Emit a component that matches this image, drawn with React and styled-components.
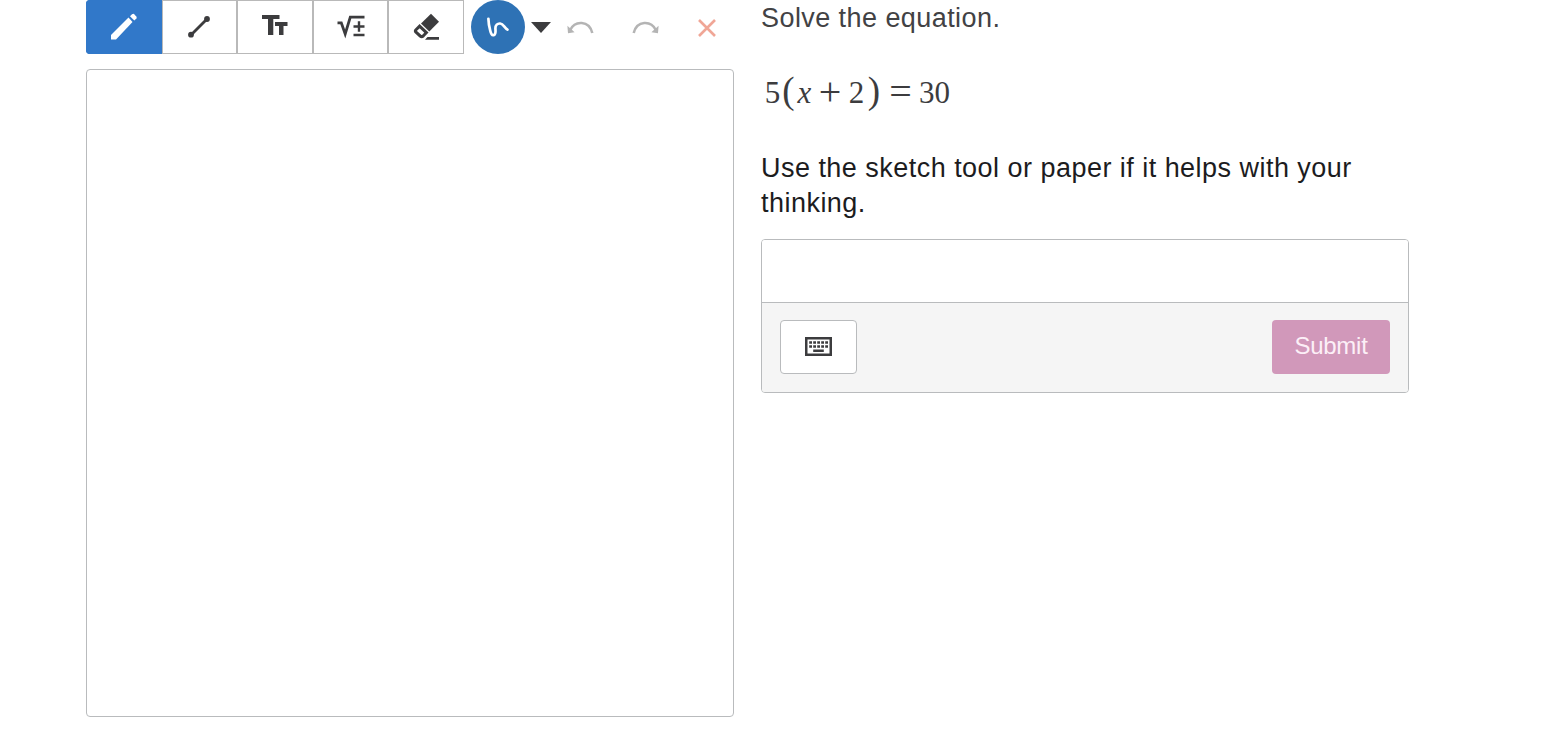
import React, { useState } from 'react';
import styled, { createGlobalStyle } from 'styled-components';

const GlobalStyle = createGlobalStyle`
  * {
    box-sizing: border-box;
  }

  body {
    margin: 0;
    background: #fff;
    color: #3c3c3e;
    font-family: "Liberation Sans", Arial, sans-serif;
    overflow: hidden;
  }
`;

// Two equal columns: sketch on the left, question on the right
const Page = styled.main`
  display: grid;
  grid-template-columns: 648px 648px;
  column-gap: 27px;
  padding-left: 86px;
  height: 744px;
`;

const SketchColumn = styled.section`
  display: flex;
  flex-direction: column;
  gap: 15px;
`;

const Toolbar = styled.div`
  display: flex;
  align-items: center;
  height: 54px;
`;

const ToolGroup = styled.div`
  display: flex;
  width: 378px;
  height: 54px;
  border-radius: 4px 0 0 4px;
  overflow: hidden;
`;

const ToolButton = styled.button`
  flex: 1;
  display: flex;
  align-items: center;
  justify-content: center;
  padding: 0;
  color: ${(props) => (props.$active ? '#fff' : '#3c3c3e')};
  background: ${(props) => (props.$active ? '#3178c9' : '#fff')};
  border: 1px solid ${(props) => (props.$active ? '#3178c9' : '#b9b9b9')};
`;

const StrokePicker = styled.button`
  display: flex;
  align-items: center;
  gap: 6px;
  margin-left: 7px;
  padding: 0;
  border: 0;
  background: none;
`;

const StrokeCircle = styled.span`
  display: flex;
  align-items: center;
  justify-content: center;
  width: 54px;
  height: 54px;
  border-radius: 50%;
  background: #2e72b5;
`;

const Caret = styled.span`
  border-left: 10px solid transparent;
  border-right: 10px solid transparent;
  border-top: 11px solid #3c3c3e;
  margin-top: 1px;
`;

const Actions = styled.div`
  display: flex;
  flex: 1;
  align-items: center;
  justify-content: space-between;
  padding: 2px 17px 0 16px;
`;

const ActionButton = styled.button`
  display: flex;
  padding: 0;
  border: 0;
  background: none;
  color: ${(props) => props.$color || '#b4b4b4'};
`;

const Canvas = styled.div`
  height: 648px;
  border: 1px solid #b9bbbd;
  border-radius: 4px;
`;

const Question = styled.section`
  display: flex;
  flex-direction: column;
  padding-top: 1px;
`;

const Prompt = styled.p`
  margin: 0;
  font-size: 27px;
  line-height: 35px;
  letter-spacing: ${(props) => props.$spacing};
  color: ${(props) => props.$color};
  white-space: pre-line;
`;

const Equation = styled.div`
  display: flex;
  align-items: center;
  height: 40px;
  margin: 37px 0 38px 3px;
  font-family: "Liberation Serif", "Times New Roman", serif;
  font-size: 31px;
  line-height: 40px;
`;

const Term = styled.span`
  width: ${(props) => props.$width}px;
  text-align: center;
  font-style: ${(props) => (props.$italic ? 'italic' : 'normal')};
`;

const Paren = styled(Term)`
  font-size: 37px;
  line-height: 36px;
  height: 40px;
`;

// Operators are drawn wider than the digits
const Operator = styled(Term)`
  height: 40px;
  font-size: 40px;
  line-height: 37px;
`;

const AnswerBox = styled.div`
  height: 154px;
  margin-top: 18px;
  border: 1px solid #b9bbbd;
  border-radius: 4px;
  overflow: hidden;
`;

const AnswerInput = styled.input`
  display: block;
  width: 100%;
  height: 63px;
  padding: 0 18px;
  border: 0;
  border-bottom: 1px solid #b9bbbd;
  outline: none;
  font-size: 27px;
`;

const AnswerFooter = styled.div`
  display: flex;
  align-items: flex-start;
  justify-content: space-between;
  height: 89px;
  padding: 17px 18px 0;
  background: #f5f5f5;
`;

const KeyboardButton = styled.button`
  display: flex;
  align-items: center;
  justify-content: center;
  width: 77px;
  height: 54px;
  padding: 0 0 1px;
  color: #3c3c3e;
  background: #fff;
  border: 1px solid #b9bbbd;
  border-radius: 4px;
`;

const SubmitButton = styled.button`
  width: 118px;
  height: 54px;
  padding: 0 0 2px;
  border: 0;
  border-radius: 4px;
  background: #d198ba;
  color: #fceff7;
  font-family: inherit;
  font-size: 24px;
  letter-spacing: -0.25px;
`;

const PencilIcon = () => (
  <svg width="28" height="28" viewBox="0 0 28 28" fill="currentColor">
    <path d="M1 26.5V22L18.5 4.5L22.5 9L6 26.5Z" />
    <path d="M20 3.2L22 1.3Q23 .5 24 1L26.3 3.4Q27 4.4 26.4 5.4L24.3 7.6Z" />
  </svg>
);

const LineIcon = () => (
  <svg width="24" height="24" viewBox="0 0 24 24">
    <path d="M4 20L20 4" stroke="currentColor" strokeWidth="2.8" />
    <circle cx="4" cy="19.7" r="2.9" fill="currentColor" />
    <circle cx="20" cy="4" r="2.9" fill="currentColor" />
  </svg>
);

const TextIcon = () => (
  <svg width="26" height="24" viewBox="0 0 26 24" fill="currentColor">
    <path d="M0 0H17.5V4H11.3V20H6V4H0Z" />
    <path d="M13 7H25.5V11H21.5V20H17V11H13Z" />
  </svg>
);

const MathIcon = () => (
  <svg width="28" height="24" viewBox="0 0 28 24" fill="none" stroke="currentColor">
    <path d="M.5 7.8H4.3L8.2 19L13.3 2.2H27.5" strokeWidth="2.8" />
    <path d="M16.5 11.5H27.5M22 6.3V16.8M16.5 20H27.5" strokeWidth="2.4" />
  </svg>
);

const EraserIcon = () => (
  <svg width="28" height="28" viewBox="-1 0 28 28">
    <path d="M18 .8L26 8.7L16.3 18.5L8 10.5Z" fill="currentColor" />
    <path
      d="M6.6 13.2L13.4 19.6L10.2 23Q8.7 24.3 7.2 23L3 19.2Q1.8 17.9 3 16.7Z"
      fill="none"
      stroke="currentColor"
      strokeWidth="3"
    />
    <path d="M14.5 24L12 26.8H26V24Z" fill="currentColor" />
  </svg>
);

const SquiggleIcon = () => (
  <svg width="24" height="22" viewBox="0 0 24 22">
    <path
      d="M2.4 2.8C2.5 7 3.2 11 4.2 14.5C5 18 6 19.6 7.6 19.2C10.2 18.3 9.6 15.5 9.4 12.5C9.2 9 11.5 7.3 14.2 7.5C17.5 7.8 18.5 12 21.5 13.6"
      fill="none"
      stroke="#fff"
      strokeWidth="2.7"
      strokeLinecap="round"
    />
  </svg>
);

const UndoIcon = ({ flip }) => (
  <svg width="27" height="14" viewBox="0 0 27 14">
    <g transform={flip ? 'translate(27 0) scale(-1 1)' : undefined}>
      <path d="M3.2 9C8-.7 22-.8 25.3 12" fill="none" stroke="currentColor" strokeWidth="2.6" />
      <path d="M.4 4.7L1 12.2L7.6 11.3Z" fill="currentColor" />
    </g>
  </svg>
);

const ClearIcon = () => (
  <svg width="20" height="20" viewBox="0 0 20 20">
    <path d="M2 2L18 18M18 2L2 18" stroke="currentColor" strokeWidth="2.6" />
  </svg>
);

const KeyboardIcon = () => (
  <svg width="27" height="19" viewBox="0 0 27 19">
    <rect x="1.25" y="1.25" width="24.5" height="16.5" fill="none" stroke="currentColor" strokeWidth="2.5" />
    <path d="M4.2 5.5H23M4.2 9.5H23" stroke="currentColor" strokeWidth="2.7" strokeDasharray="2.8 1.2" />
    <path d="M8.2 13.8H18.8" stroke="currentColor" strokeWidth="2.5" />
  </svg>
);

const tools = [
  { name: 'Pencil', Icon: PencilIcon },
  { name: 'Line', Icon: LineIcon },
  { name: 'Text', Icon: TextIcon },
  { name: 'Math', Icon: MathIcon },
  { name: 'Eraser', Icon: EraserIcon },
];

const App = () => {
  const [tool, setTool] = useState('Pencil');
  const [answer, setAnswer] = useState('');

  return (
    <Page>
      <GlobalStyle />
      <SketchColumn>
        <Toolbar>
          <ToolGroup>
            {tools.map(({ name, Icon }) => (
              <ToolButton
                key={name}
                aria-label={name}
                $active={tool === name}
                onClick={() => setTool(name)}
              >
                <Icon />
              </ToolButton>
            ))}
          </ToolGroup>
          <StrokePicker aria-label="Stroke">
            <StrokeCircle>
              <SquiggleIcon />
            </StrokeCircle>
            <Caret />
          </StrokePicker>
          <Actions>
            <ActionButton aria-label="Undo"><UndoIcon /></ActionButton>
            <ActionButton aria-label="Redo"><UndoIcon flip /></ActionButton>
            <ActionButton aria-label="Clear" $color="#f0a696"><ClearIcon /></ActionButton>
          </Actions>
        </Toolbar>
        <Canvas />
      </SketchColumn>

      <Question>
        <Prompt $color="#424244" $spacing="0.43px">Solve the equation.</Prompt>
        <Equation>
          <Term $width={17}>5</Term>
          <Paren $width={15}>(</Paren>
          <Term $width={17} $italic>x</Term>
          <Operator $width={34}>+</Operator>
          <Term $width={19}>2</Term>
          <Paren $width={16}>)</Paren>
          <Operator $width={37}>=</Operator>
          <Term $width={31}>30</Term>
        </Equation>
        <Prompt $color="#1c1c1e" $spacing="0.47px">
          {'Use the sketch tool or paper if it helps with your\nthinking.'}
        </Prompt>
        <AnswerBox>
          <AnswerInput
            aria-label="Answer"
            value={answer}
            onChange={(e) => setAnswer(e.target.value)}
          />
          <AnswerFooter>
            <KeyboardButton aria-label="Keyboard"><KeyboardIcon /></KeyboardButton>
            <SubmitButton>Submit</SubmitButton>
          </AnswerFooter>
        </AnswerBox>
      </Question>
    </Page>
  );
};

export default App;
